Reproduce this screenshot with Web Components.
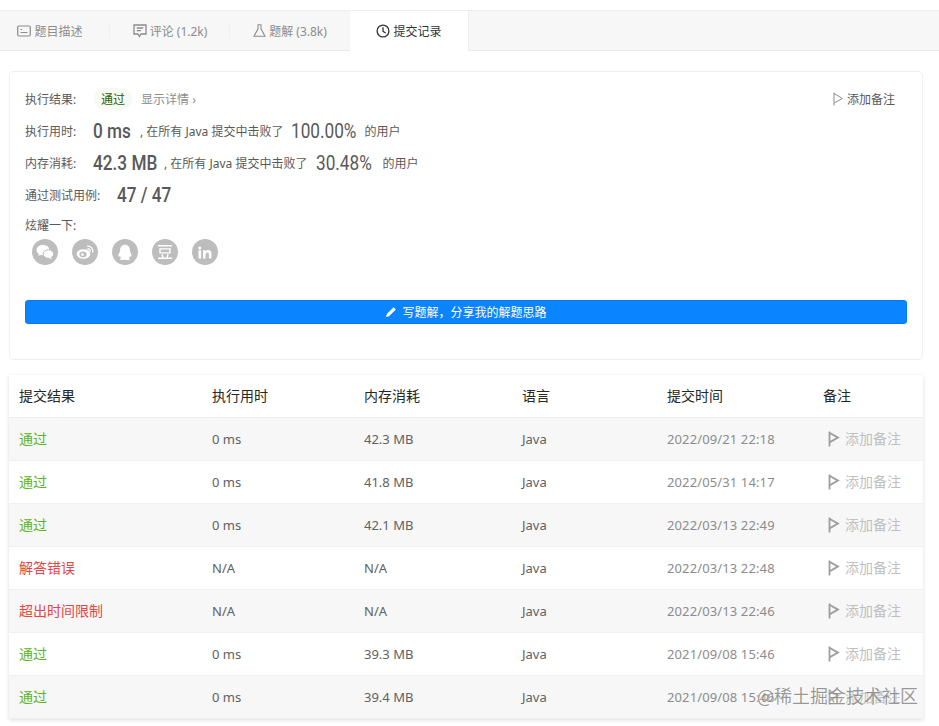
<!DOCTYPE html>
<html lang="zh"><head><meta charset="utf-8"><title>提交记录</title>
<style>
html,body{margin:0;padding:0;background:#fff}
body{width:939px;height:726px;overflow:hidden;position:relative;font:12px "Noto Sans","Noto Sans CJK SC",sans-serif;color:#595959}
</style></head><body>
<sub-page></sub-page>
<template id="flag"><svg width="12" height="16" viewBox="0 0 12 16" fill="none" stroke="currentColor" stroke-width="1.8"><path d="M1.5 0.5V15.5"/><path d="M1.5 1.8L10 6.6L1.5 11.4"/></svg></template>
<script>
const flag=()=>document.getElementById('flag').innerHTML;
const FONT='"Noto Sans","Noto Sans CJK SC",sans-serif';
class SubTab extends HTMLElement{
  connectedCallback(){
    const r=this.shadowRoot||this.attachShadow({mode:'open'});
    r.innerHTML=`<style>
:host{display:flex;align-items:center;justify-content:center;gap:3px;height:39px;box-sizing:border-box;font-size:12px;color:#8c8c8c;font-family:${FONT};position:relative}
:host([active]){background:#fff;color:#333;height:40px;margin-bottom:-1px;border-right:1px solid #eee}
:host([first]){padding-right:10px}
:host([sep])::after{content:"";position:absolute;right:0;top:13px;height:15px;width:1px;background:#efefef}
::slotted(svg){flex:none}
</style><slot name="i"></slot><slot></slot>`;
  }
}
class SubTabs extends HTMLElement{
  connectedCallback(){
    this.attachShadow({mode:'open'}).innerHTML=`<style>
:host{display:grid;grid-template-columns:110px 120px 120px 119px;height:41px;box-sizing:border-box;margin-top:10px;background:#f7f7f7;border-top:1px solid #eee;border-bottom:1px solid #eaeaea}
</style><slot></slot>`;
  }
}
class StatLine extends HTMLElement{
  connectedCallback(){
    this.attachShadow({mode:'open'}).innerHTML=`<style>
:host{display:flex;align-items:center;height:32px;font-size:12px;color:#595959;font-family:${FONT};white-space:pre}
</style><slot></slot>`;
  }
}
class BigNum extends HTMLElement{
  connectedCallback(){
    this.attachShadow({mode:'open'}).innerHTML=`<style>
:host{display:inline-block;flex:none;font-family:Roboto,sans-serif;font-size:20px;line-height:24px;font-weight:500;color:#595959;white-space:pre}
:host([thin]){font-weight:400}
span{display:inline-block;transform-origin:0 50%;transform:scaleX(.86)}
</style><span><slot></slot></span>`;
  }
}
class ShareBtn extends HTMLElement{
  connectedCallback(){
    this.attachShadow({mode:'open'}).innerHTML=`<style>
:host{display:flex;align-items:center;justify-content:center;width:26px;height:26px;border-radius:50%;background:#bdbdbd;color:#fff}
::slotted(svg){display:block}
</style><slot></slot>`;
  }
}
class SubRow extends HTMLElement{
  connectedCallback(){
    const head=this.hasAttribute('head');
    const c=(this.getAttribute('cells')||'').split('|');
    const st=this.getAttribute('status')||'';
    this.attachShadow({mode:'open'}).innerHTML=`<style>
:host{display:grid;grid-template-columns:193px 152px 158px 145px 156px 1fr;align-items:center;height:43px;box-sizing:border-box;padding-left:10px;font:13px ${FONT};color:#616161;background:#fff;border-bottom:1px solid #f0f0f0}
:host([head]){font-size:14px;color:#262626;border-bottom:1px solid #ececec}
:host([head]) div{padding-bottom:2px}
:host([odd]){background:#f7f7f7}
.ok{color:#5fb324}.bad{color:#e54545}
.st{font-size:14px;padding-bottom:2px}
.t{color:#8c8c8c;letter-spacing:.12px}
.note{display:flex;align-items:center;gap:5px;margin-left:5px;color:#bfbfbf;font-size:14px}
.note svg{color:#9e9e9e;flex:none}
.note span{position:relative;top:-1px}
</style>`+(head?c.map(x=>`<div>${x}</div>`).join(''):
`<div class="st ${st}">${c[0]}</div><div>${c[1]}</div><div>${c[2]}</div><div>${c[3]}</div><div class="t">${c[4]}</div><div class="note">${flag()}<span>添加备注</span></div>`);
  }
}
class SubTable extends HTMLElement{
  connectedCallback(){
    this.attachShadow({mode:'open'}).innerHTML=`<style>
:host{display:block;margin:15px 16px 0 9px;box-shadow:0 1px 4px rgba(0,0,0,.14);background:#fff}
</style><slot></slot>`;
  }
}
class ResultCard extends HTMLElement{
  connectedCallback(){
    this.attachShadow({mode:'open'}).innerHTML=`<style>
:host{display:block;box-sizing:border-box;margin:20px 16px 0 9px;height:289px;padding:11px 15px 0;border:1px solid #efefef;border-radius:5px;background:#fff;font-family:${FONT}}
</style><slot></slot>`;
  }
}
class SubPage extends HTMLElement{
  connectedCallback(){
    const rows=[
['ok','通过','0 ms','42.3 MB','2022/09/21 22:18'],
['ok','通过','0 ms','41.8 MB','2022/05/31 14:17'],
['ok','通过','0 ms','42.1 MB','2022/03/13 22:49'],
['bad','解答错误','N/A','N/A','2022/03/13 22:48'],
['bad','超出时间限制','N/A','N/A','2022/03/13 22:46'],
['ok','通过','0 ms','39.3 MB','2021/09/08 15:46'],
['ok','通过','0 ms','39.4 MB','2021/09/08 15:46']];
    const rowHtml=rows.map((x,i)=>`<sub-row ${i%2==0?'odd':''} status="${x[0]}" cells="${x[1]}|${x[2]}|${x[3]}|Java|${x[4]}"></sub-row>`).join('');
    this.attachShadow({mode:'open'}).innerHTML=`<style>
:host{display:flow-root;width:939px;height:726px;position:relative;font-family:${FONT}}
.l{display:inline-block;flex:none}
.top{display:flex;align-items:center;height:32px;font-size:12px;color:#595959}
.pill{display:inline-flex;align-items:center;justify-content:center;width:38px;height:22px;margin-left:15px;border-radius:11px;background:#f7faf2;color:#2e5c00;}
.more{margin-left:9px;color:#8c8c8c}
.add{margin-left:auto;margin-right:12px;display:flex;align-items:center;gap:3px;color:#595959}
.add svg{color:#8c8c8c}
.small{font-size:12px;flex:none}
.share-t{margin-top:5px;font-size:12px;color:#595959;height:19px;line-height:19px}
.share{display:flex;gap:14px;padding-left:7px;margin-top:4px}
.btn{display:flex;align-items:center;justify-content:center;gap:5px;margin-top:35px;height:24px;box-sizing:border-box;background:#0a84ff;border:1px solid #0a7bed;border-radius:3px;color:#fff;font-size:12px}
.wm{position:absolute;left:757px;top:683px;font-size:18px;line-height:24px;color:rgba(120,120,120,.75);text-shadow:0 0 3px rgba(255,255,255,.9);white-space:nowrap;font-family:"Noto Sans CJK SC",sans-serif}
</style>
<sub-tabs>
 <sub-tab first sep><svg slot="i" width="14" height="12" viewBox="0 0 14 12" fill="none" stroke="#8c8c8c" stroke-width="1.2"><rect x=".7" y="1" width="12.6" height="10" rx="1.2"/><path d="M3.500 4.500h1.500M3.500 7.500h7"/></svg>题目描述</sub-tab>
 <sub-tab sep><svg slot="i" width="14" height="14" viewBox="0 0 14 14" fill="none" stroke="#8c8c8c" stroke-width="1.3"><path d="M1 1h12v9H8l-1.500 2.500L5 10H1z"/><path d="M3.800 4h6.400M3.800 6.600h4.200"/></svg>评论 (1.2k)</sub-tab>
 <sub-tab><svg slot="i" width="13" height="13" viewBox="0 0 13 13" fill="none" stroke="#8c8c8c" stroke-width="1.1"><path d="M4.500.8h4M5 .8v4L1 12.200h11L8 4.800v-4"/></svg>题解 (3.8k)</sub-tab>
 <sub-tab active><svg slot="i" width="14" height="14" viewBox="0 0 14 14" fill="none" stroke="#333" stroke-width="1.3"><circle cx="7" cy="7" r="5.900"/><path d="M7 3.200V7.400L9.800 9"/></svg>提交记录</sub-tab>
</sub-tabs>
<result-card>
 <div class="top"><span class="l" style="width:54px">执行结果:</span><span class="pill">通过</span><span class="more">显示详情 <span style="font-size:12px">›</span></span>
  <span class="add"><svg width="11" height="14" viewBox="0 0 11 14" fill="none" stroke="currentColor" stroke-width="1"><path d="M1 .5V13.500"/><path d="M1 1.500L9.500 6.500L1 11"/></svg>添加备注</span></div>
 <stat-line><span class="l" style="width:68px">执行用时:</span><big-num style="width:47px">0 ms</big-num><span class="small">, 在所有 Java 提交中击败了</span><big-num thin style="width:73px;margin-left:8px">100.00%</big-num><span class="small">的用户</span></stat-line>
 <stat-line><span class="l" style="width:68px">内存消耗:</span><big-num style="width:71px">42.3 MB</big-num><span class="small">, 在所有 Java 提交中击败了</span><big-num thin style="width:66px;margin-left:9px">30.48%</big-num><span class="small">的用户</span></stat-line>
 <stat-line><span class="l" style="width:92px">通过测试用例:</span><big-num>47 / 47</big-num></stat-line>
 <div class="share-t">炫耀一下:</div>
 <div class="share">
  <share-btn><svg width="18" height="16" viewBox="0 0 18 16" fill="#fff"><ellipse cx="7" cy="6" rx="6.500" ry="5.300"/><path d="M3 9l-.6 3 3-1.600z"/><ellipse cx="12.400" cy="10" rx="5.200" ry="4.300" stroke="#bdbdbd" stroke-width="1"/><path d="M15 13l.8 2.300-2.800-1.400z"/></svg></share-btn>
  <share-btn><svg width="18" height="16" viewBox="0 0 18 16"><ellipse cx="7.500" cy="10" rx="6.800" ry="4.800" fill="#fff"/><ellipse cx="7" cy="10.400" rx="3.600" ry="2.800" fill="#bdbdbd"/><circle cx="6.500" cy="10.600" r="1.300" fill="#fff"/><path d="M11 2.200a5 5 0 0 1 5.600 6.400M11.400 4.800a2.400 2.400 0 0 1 2.700 3" fill="none" stroke="#fff" stroke-width="1.300"/></svg></share-btn>
  <share-btn><svg width="16" height="17" viewBox="0 0 16 17" fill="#fff"><path d="M8 .8c3.200 0 4.900 2.500 4.900 5.400 0 .6 0 1 .1 1.400.6 1 1.600 2.700 1.600 4.200 0 1-.6 1.200-1.600.2-.2.8-.6 1.500-1.200 2 .7.3 1.300.8 1.300 1.300 0 .5-1.500.7-3 .7-1 0-1.600-.3-2.100-.6-.5.3-1.100.6-2.100.6-1.500 0-3-.2-3-.7 0-.5.6-1 1.300-1.300-.6-.5-1-1.200-1.200-2-1 1-1.600.8-1.600-.2 0-1.500 1-3.200 1.600-4.200.1-.4.1-.8.1-1.400C3.100 3.300 4.800.8 8 .8z"/></svg></share-btn>
  <share-btn><svg width="16" height="16" viewBox="0 0 16 16" fill="none" stroke="#fff" stroke-width="1.400"><path d="M1 1.700h14M3 4.900h10v4H3zM1 14.300h14M5 10.300l1 3.500M11 10.300l-1 3.500"/></svg></share-btn>
  <share-btn><svg width="14" height="13" viewBox="0 0 14 13" fill="#fff"><circle cx="1.800" cy="1.900" r="1.500"/><rect x=".5" y="4.300" width="2.600" height="8.200"/><path d="M5 4.300h2.500v1.200c.5-.8 1.500-1.400 2.700-1.400 2.400 0 3.300 1.500 3.300 3.900v4.500h-2.600V8.400c0-1.200-.3-2-1.400-2-1.200 0-1.900.8-1.900 2.100v4H5z"/></svg></share-btn>
 </div>
 <div class="btn"><svg width="12" height="12" viewBox="0 0 12 12" fill="#fff"><path d="M8.600 1.200l2.200 2.200L4 10.200l-3 .8.800-3z"/></svg>写题解，分享我的解题思路</div>
</result-card>
<sub-table>
 <sub-row head cells="提交结果|执行用时|内存消耗|语言|提交时间|备注"></sub-row>
 ${rowHtml}
</sub-table>
<div class="wm">@稀土掘金技术社区</div>`;
  }
}
customElements.define('sub-tab',SubTab);
customElements.define('sub-tabs',SubTabs);
customElements.define('stat-line',StatLine);
customElements.define('big-num',BigNum);
customElements.define('share-btn',ShareBtn);
customElements.define('sub-row',SubRow);
customElements.define('sub-table',SubTable);
customElements.define('result-card',ResultCard);
customElements.define('sub-page',SubPage);
</script>
</body></html>
